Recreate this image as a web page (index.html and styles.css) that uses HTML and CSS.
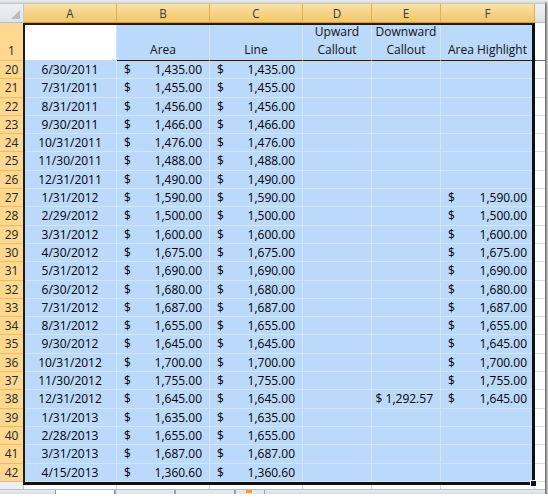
FILE: index.html
```html
<!DOCTYPE html>
<html>
<head>
<meta charset="utf-8">
<link rel="stylesheet" href="styles.css">
</head>
<body>
<div class="frame">
  <div class="topband"></div>
  <div class="sheet">
    <div class="corner"></div>
    <div class="ch">A</div><div class="ch">B</div><div class="ch">C</div><div class="ch">D</div><div class="ch">E</div><div class="ch">F</div><div class="ch grey"></div>

    <div class="rh r1">1</div>
    <div class="a1"></div>
    <div class="hd">Area</div>
    <div class="hd">Line</div>
    <div class="hd">Upward<br>Callout</div>
    <div class="hd">Downward<br>Callout</div>
    <div class="hd">Area Highlight</div>
    <div class="x r1x"></div>

    <div class="rh">20</div><div class="c dt">6/30/2011</div><div class="c acc"><span>$</span><span>1,435.00</span></div><div class="c acc"><span>$</span><span>1,435.00</span></div><div class="c"></div><div class="c"></div><div class="c"></div><div class="x"></div>
    <div class="rh">21</div><div class="c dt">7/31/2011</div><div class="c acc"><span>$</span><span>1,455.00</span></div><div class="c acc"><span>$</span><span>1,455.00</span></div><div class="c"></div><div class="c"></div><div class="c"></div><div class="x"></div>
    <div class="rh">22</div><div class="c dt">8/31/2011</div><div class="c acc"><span>$</span><span>1,456.00</span></div><div class="c acc"><span>$</span><span>1,456.00</span></div><div class="c"></div><div class="c"></div><div class="c"></div><div class="x"></div>
    <div class="rh">23</div><div class="c dt">9/30/2011</div><div class="c acc"><span>$</span><span>1,466.00</span></div><div class="c acc"><span>$</span><span>1,466.00</span></div><div class="c"></div><div class="c"></div><div class="c"></div><div class="x"></div>
    <div class="rh">24</div><div class="c dt">10/31/2011</div><div class="c acc"><span>$</span><span>1,476.00</span></div><div class="c acc"><span>$</span><span>1,476.00</span></div><div class="c"></div><div class="c"></div><div class="c"></div><div class="x"></div>
    <div class="rh">25</div><div class="c dt">11/30/2011</div><div class="c acc"><span>$</span><span>1,488.00</span></div><div class="c acc"><span>$</span><span>1,488.00</span></div><div class="c"></div><div class="c"></div><div class="c"></div><div class="x"></div>
    <div class="rh">26</div><div class="c dt">12/31/2011</div><div class="c acc"><span>$</span><span>1,490.00</span></div><div class="c acc"><span>$</span><span>1,490.00</span></div><div class="c"></div><div class="c"></div><div class="c"></div><div class="x"></div>
    <div class="rh">27</div><div class="c dt">1/31/2012</div><div class="c acc"><span>$</span><span>1,590.00</span></div><div class="c acc"><span>$</span><span>1,590.00</span></div><div class="c"></div><div class="c"></div><div class="c acc"><span>$</span><span>1,590.00</span></div><div class="x"></div>
    <div class="rh">28</div><div class="c dt">2/29/2012</div><div class="c acc"><span>$</span><span>1,500.00</span></div><div class="c acc"><span>$</span><span>1,500.00</span></div><div class="c"></div><div class="c"></div><div class="c acc"><span>$</span><span>1,500.00</span></div><div class="x"></div>
    <div class="rh">29</div><div class="c dt">3/31/2012</div><div class="c acc"><span>$</span><span>1,600.00</span></div><div class="c acc"><span>$</span><span>1,600.00</span></div><div class="c"></div><div class="c"></div><div class="c acc"><span>$</span><span>1,600.00</span></div><div class="x"></div>
    <div class="rh">30</div><div class="c dt">4/30/2012</div><div class="c acc"><span>$</span><span>1,675.00</span></div><div class="c acc"><span>$</span><span>1,675.00</span></div><div class="c"></div><div class="c"></div><div class="c acc"><span>$</span><span>1,675.00</span></div><div class="x"></div>
    <div class="rh">31</div><div class="c dt">5/31/2012</div><div class="c acc"><span>$</span><span>1,690.00</span></div><div class="c acc"><span>$</span><span>1,690.00</span></div><div class="c"></div><div class="c"></div><div class="c acc"><span>$</span><span>1,690.00</span></div><div class="x"></div>
    <div class="rh">32</div><div class="c dt">6/30/2012</div><div class="c acc"><span>$</span><span>1,680.00</span></div><div class="c acc"><span>$</span><span>1,680.00</span></div><div class="c"></div><div class="c"></div><div class="c acc"><span>$</span><span>1,680.00</span></div><div class="x"></div>
    <div class="rh">33</div><div class="c dt">7/31/2012</div><div class="c acc"><span>$</span><span>1,687.00</span></div><div class="c acc"><span>$</span><span>1,687.00</span></div><div class="c"></div><div class="c"></div><div class="c acc"><span>$</span><span>1,687.00</span></div><div class="x"></div>
    <div class="rh">34</div><div class="c dt">8/31/2012</div><div class="c acc"><span>$</span><span>1,655.00</span></div><div class="c acc"><span>$</span><span>1,655.00</span></div><div class="c"></div><div class="c"></div><div class="c acc"><span>$</span><span>1,655.00</span></div><div class="x"></div>
    <div class="rh">35</div><div class="c dt">9/30/2012</div><div class="c acc"><span>$</span><span>1,645.00</span></div><div class="c acc"><span>$</span><span>1,645.00</span></div><div class="c"></div><div class="c"></div><div class="c acc"><span>$</span><span>1,645.00</span></div><div class="x"></div>
    <div class="rh">36</div><div class="c dt">10/31/2012</div><div class="c acc"><span>$</span><span>1,700.00</span></div><div class="c acc"><span>$</span><span>1,700.00</span></div><div class="c"></div><div class="c"></div><div class="c acc"><span>$</span><span>1,700.00</span></div><div class="x"></div>
    <div class="rh">37</div><div class="c dt">11/30/2012</div><div class="c acc"><span>$</span><span>1,755.00</span></div><div class="c acc"><span>$</span><span>1,755.00</span></div><div class="c"></div><div class="c"></div><div class="c acc"><span>$</span><span>1,755.00</span></div><div class="x"></div>
    <div class="rh">38</div><div class="c dt">12/31/2012</div><div class="c acc"><span>$</span><span>1,645.00</span></div><div class="c acc"><span>$</span><span>1,645.00</span></div><div class="c"></div><div class="c num">$ 1,292.57</div><div class="c acc"><span>$</span><span>1,645.00</span></div><div class="x"></div>
    <div class="rh">39</div><div class="c dt">1/31/2013</div><div class="c acc"><span>$</span><span>1,635.00</span></div><div class="c acc"><span>$</span><span>1,635.00</span></div><div class="c"></div><div class="c"></div><div class="c"></div><div class="x"></div>
    <div class="rh">40</div><div class="c dt">2/28/2013</div><div class="c acc"><span>$</span><span>1,655.00</span></div><div class="c acc"><span>$</span><span>1,655.00</span></div><div class="c"></div><div class="c"></div><div class="c"></div><div class="x"></div>
    <div class="rh">41</div><div class="c dt">3/31/2013</div><div class="c acc"><span>$</span><span>1,687.00</span></div><div class="c acc"><span>$</span><span>1,687.00</span></div><div class="c"></div><div class="c"></div><div class="c"></div><div class="x"></div>
    <div class="rh">42</div><div class="c dt">4/15/2013</div><div class="c acc"><span>$</span><span>1,360.60</span></div><div class="c acc"><span>$</span><span>1,360.60</span></div><div class="c"></div><div class="c"></div><div class="c"></div><div class="x"></div>

    <div class="brh"></div><div class="b"></div><div class="b"></div><div class="b"></div><div class="b"></div><div class="b"></div><div class="b"></div><div class="b last"></div>

    <div class="selection"><div class="handle"></div></div>
  </div>
  <div class="tabs">
    <div class="tab active"></div>
    <div class="tab"></div>
    <div class="tab"></div>
    <div class="tab newtab"><span class="star"></span></div>
  </div>
</div>
</body>
</html>
```

FILE: styles.css
```css
* { box-sizing: border-box; }

body {
  margin: 0;
  background: #ffffff;
  font-family: "Open Sans", "Liberation Sans", sans-serif;
  font-size: 12px;
  color: #000000;
}

.frame {
  width: 545px;
  height: 494px;
  overflow: hidden;
  background: #ffffff;
  box-shadow: 2px 2px 3px rgba(0, 0, 0, 0.65);
}

.topband {
  height: 4px;
  background: linear-gradient(#eceef1, #d2d6dc);
  border-bottom: 1px solid #c3c8cf;
}

.sheet {
  position: relative;
  display: grid;
  grid-template-columns: 24px 93px 93px 93px 69px 69px 94px 10px;
  grid-template-rows: 19px 38px repeat(23, 18.3px) 7px;
}

.corner {
  position: relative;
  background: linear-gradient(#eef0f3, #dfe3e8);
  border-right: 1px solid #c3c8cf;
  border-bottom: 1px solid #b9bfc7;
}

.corner::after {
  content: "";
  position: absolute;
  right: 3px;
  bottom: 3px;
  border-style: solid;
  border-width: 0 0 9px 9px;
  border-color: transparent transparent #b6bcc5 transparent;
}

.ch {
  background: linear-gradient(#fae0aa, #f3c668);
  border-right: 1px solid #dfae55;
  border-bottom: 1px solid #d49b37;
  color: #3a3a3a;
  text-align: center;
  line-height: 18px;
  font-size: 11.7px;
}

.ch.grey {
  background: linear-gradient(#f0f2f5, #dde1e6);
  border-right: 0;
  border-bottom: 1px solid #b9bfc7;
}

.rh {
  background: #fdd88e;
  border-right: 1px solid #d6a14a;
  border-bottom: 1px solid #ecbd66;
  color: #262626;
  text-align: center;
  line-height: 17.3px;
}

.rh.r1 {
  display: flex;
  align-items: flex-end;
  justify-content: center;
  padding-bottom: 1px;
}

.a1 {
  background: #ffffff;
  border-right: 1px solid #d3e4f6;
  border-bottom: 1px solid #c4d8ee;
}

.hd {
  background: #bad9fb;
  border-right: 1px solid #d3e4f6;
  border-bottom: 1px solid #222222;
  display: flex;
  flex-direction: column;
  justify-content: flex-end;
  align-items: center;
  text-align: center;
  line-height: 18px;
  padding-bottom: 1px;
  color: #111111;
}

.c {
  background: #bad9fb;
  border-right: 1px solid #d3e4f6;
  border-bottom: 1px solid #d3e4f6;
  line-height: 17.3px;
  white-space: nowrap;
  overflow: hidden;
}

.dt { text-align: center; }

.acc {
  display: flex;
  justify-content: space-between;
  padding: 0 7px 0 7px;
}

.num {
  text-align: right;
  padding-right: 7px;
}

.x {
  background: #ffffff;
  border-bottom: 1px solid #dadcdf;
}

.r1x { border-bottom: 1px solid #6d6d6d; }

.brh {
  background: #eceef1;
  border-right: 1px solid #c3c8cf;
}

.b {
  background: #ffffff;
  border-right: 1px solid #dadcdf;
}

.b.last { border-right: 0; }

.selection {
  position: absolute;
  left: 23px;
  top: 19px;
  width: 512px;
  height: 462px;
  border-top: 2px solid #1c1c1c;
  border-left: 2px solid #1c1c1c;
  border-right: 3px solid #111111;
  border-bottom: 3px solid #111111;
  pointer-events: none;
}

.handle {
  position: absolute;
  right: -5px;
  bottom: -5px;
  width: 7px;
  height: 7px;
  background: #111111;
  border: 1px solid #ffffff;
}

.tabs {
  height: 5px;
  background: linear-gradient(#e9ecf0, #d9dde3);
  border-top: 1px solid #b8bec6;
  display: flex;
  padding-left: 55px;
}

.tab {
  width: 60px;
  height: 4px;
  border-left: 1px solid #9aa3ad;
  border-right: 1px solid #9aa3ad;
  background: #e4e8ed;
}

.tab.active {
  background: #ffffff;
  border-color: #8c96a2;
}

.tab.newtab {
  width: 30px;
  position: relative;
}

.star {
  position: absolute;
  left: 10px;
  top: 0;
  width: 6px;
  height: 3px;
  background: #f0a030;
}
```
